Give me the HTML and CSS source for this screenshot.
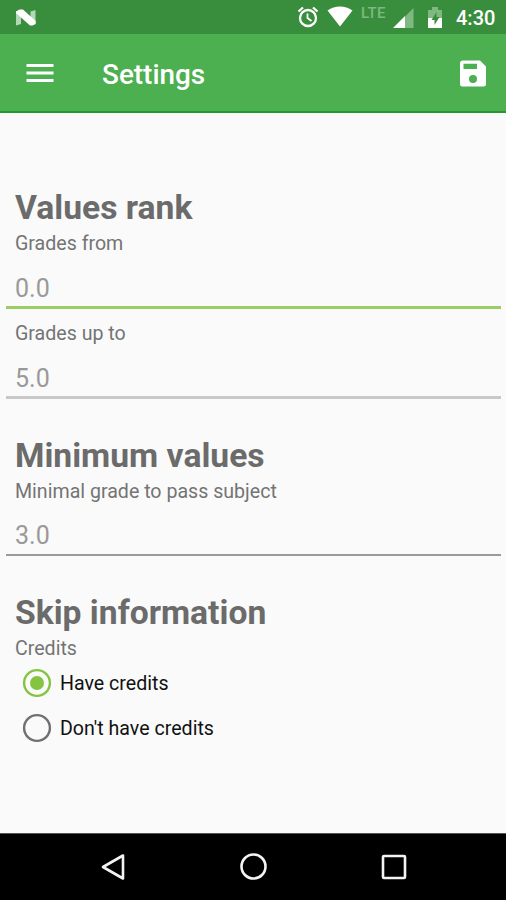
FILE: index.html
```html
<!DOCTYPE html>
<html lang="en">
<head>
<meta charset="utf-8">
<title>Settings</title>
<link rel="stylesheet" href="styles.css">
</head>
<body>
<div class="screen">
  <div class="status">
    <svg class="logo" width="22" height="18" viewBox="0 0 22 18"><path fill="#b4d8b5" d="M1 2.500 6 1v14l-5 1.500zM15.500 2.500l5-1.500v13l-5 1.500z"/><path fill="#fff" d="M1 2.500 4.500.5H8L20.700 12v3l-3.200 1.500h-2.500L1 4z"/></svg>
    <svg class="alarm" width="22" height="22" viewBox="0 0 22 22" fill="none" stroke="#fff"><circle cx="11" cy="12" r="8" stroke-width="2.300"/><path stroke-width="1.8" d="M10.500 7.500V12l4 3"/><path stroke-width="2.300" d="m1.500 5.500 4.500-4M20.500 5.500l-4.500-4"/></svg>
    <svg class="wifi" width="26" height="22" viewBox="0 0 26 22"><path fill="#fff" d="M.5 4.500C8-1 18-1 25.500 4.500L13 20.500z"/></svg>
    <span class="lte">LTE</span>
    <svg class="signal" width="22" height="22" viewBox="0 0 22 22"><path fill="#7fb981" d="M12 9.500 20.500 1v20H12z"/><path fill="#fff" d="M0 21 12 9v12z"/></svg>
    <svg class="battery" width="14" height="22" viewBox="0 0 14 22"><path fill="#7fb981" d="M0 3h4V0h6v3h4v8H0z"/><path fill="#fff" d="M0 11h14v10H0z"/><path fill="#388e3c" d="M8.500 5 3.500 13h3v5l5-8H8.500z"/></svg>
    <span class="clock">4:30</span>
  </div>
  <header class="bar">
    <svg class="menu" width="28" height="20" viewBox="0 0 28 20"><path fill="#fff" d="M.5 0h27v3H.5zM.5 7.500h27v3H.5zM.5 15h27v3H.5z"/></svg>
    <h1 class="title">Settings</h1>
    <svg class="save" width="26" height="27" viewBox="0 0 26 27"><path fill="#fff" fill-rule="evenodd" d="M3 .5h17l6 6V24a2.500 2.500 0 0 1-2.500 2.500H2.500A2.500 2.500 0 0 1 0 24V3.500a3 3 0 0 1 3-3zM3.500 3.700v5.300h13.500V3.700zM13 15a4 4 0 1 0 0 8 4 4 0 0 0 0-8z"/></svg>
  </header>
  <main class="content">
    <section class="group">
      <h2>Values rank</h2>
      <div class="label">Grades from</div>
      <div class="field focused">0.0</div>
      <div class="label second">Grades up to</div>
      <div class="field disabled">5.0</div>
    </section>
    <section class="group minimum">
      <h2>Minimum values</h2>
      <div class="label">Minimal grade to pass subject</div>
      <div class="field thin">3.0</div>
    </section>
    <section class="group skip">
      <h2>Skip information</h2>
      <div class="label credits">Credits</div>
      <div class="option"><svg width="30" height="30" viewBox="0 0 30 30"><circle cx="15" cy="15" r="12.900" fill="none" stroke="#84c441" stroke-width="2.400"/><circle cx="15" cy="15" r="7" fill="#84c441"/></svg><span>Have credits</span></div>
      <div class="option"><svg width="30" height="30" viewBox="0 0 30 30"><circle cx="15" cy="15" r="12.900" fill="none" stroke="#707070" stroke-width="2.400"/></svg><span>Don't have credits</span></div>
    </section>
  </main>
  <nav class="nav">
    <svg width="30" height="30" viewBox="0 0 30 30"><path d="M25 3.500v23L5 15z"/></svg>
    <svg width="30" height="30" viewBox="0 0 30 30"><circle cx="14.500" cy="14.500" r="12"/></svg>
    <svg width="30" height="30" viewBox="0 0 30 30"><rect x="4" y="4" width="22" height="22" rx="1"/></svg>
  </nav>
</div>
</body>
</html>
```
FILE: styles.css
```css
* { box-sizing: border-box; }
body { margin: 0; font-family: Roboto, "Liberation Sans", sans-serif; }
h1, h2 { margin: 0; }
svg { display: block; flex: none; }
.screen { width: 506px; height: 900px; display: flex; flex-direction: column; background: #fafafa; overflow: hidden; }
.status { height: 34px; flex: none; display: flex; align-items: flex-start; background: #388e3c; padding-left: 15px; }
.logo { margin-top: 9px; }
.alarm { margin: 6px 0 0 260px; }
.wifi { margin: 6px 0 0 8px; }
.lte { margin: 6px 0 0 8px; width: 26px; font-size: 15px; line-height: 15px; font-weight: 500; color: #7fb981; letter-spacing: .3px; }
.signal { margin: 7px 0 0 6px; }
.battery { margin: 7px 0 0 13px; }
.clock { margin: 6px 0 0 14px; font-size: 20px; line-height: 24px; font-weight: 500; color: #fff; }
.bar { height: 79px; flex: none; display: flex; background: #4caf50; border-bottom: 2px solid #26992c; padding-left: 26px; }
.menu { margin-top: 30px; }
.title { margin: 24px 0 0 48px; width: 358px; font-size: 27.9px; line-height: 33px; font-weight: 500; color: #fff; }
.save { margin-top: 26px; }
.content { flex: 1; padding: 75px 5px 0 6px; }
h2 { padding-left: 9px; font-size: 33.65px; line-height: 40px; font-weight: 700; color: #6b6b6b; }
.label { height: 31px; padding-left: 9px; font-size: 19.6px; line-height: 31px; color: #747474; }
.second { margin-top: 9px; }
.field { height: 50px; padding: 15px 0 0 9px; font-size: 25px; line-height: 30px; color: #999; border-bottom: 3px solid #9ccc65; }
.disabled { height: 50px; border-bottom-color: #c8c8c8; }
.thin { height: 49px; padding-top: 14px; border-bottom: 2px solid #9a9a9a; }
.minimum { margin-top: 37px; }
.skip { margin-top: 37px; }
.credits { height: 27px; }
.option { height: 45px; display: flex; align-items: center; padding-left: 16px; gap: 8px; font-size: 19.6px; line-height: 24px; color: #111; }
.option span { padding-top: 2px; }
.nav { height: 67px; flex: none; display: flex; align-items: center; justify-content: space-between; padding: 0 97px 0 98px; background: #000; border-top: 1px solid #555; }
.nav svg { fill: none; stroke: #f4f4f4; stroke-width: 2.6; stroke-linejoin: round; }
```
